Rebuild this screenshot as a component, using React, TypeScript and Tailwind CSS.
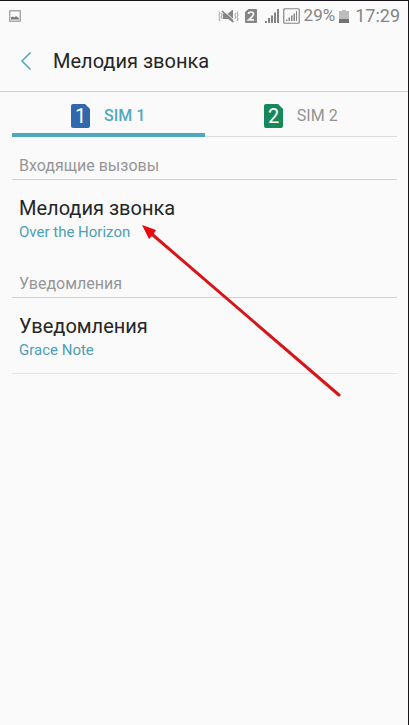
import { useState } from "react";

const sims = [
  { id: 1, label: "SIM 1", color: "#2f68ad" },
  { id: 2, label: "SIM 2", color: "#16885a" },
];

const sections = [
  { heading: "Входящие вызовы", title: "Мелодия звонка", value: "Over the Horizon" },
  { heading: "Уведомления", title: "Уведомления", value: "Grace Note" },
];

function SimIcon({ id, color }: { id: number; color: string }) {
  return (
    <svg width="19" height="24" viewBox="0 0 19 24" aria-hidden="true">
      <path d="M2 0H14L19 5V22a2 2 0 0 1-2 2H2a2 2 0 0 1-2-2V2a2 2 0 0 1 2-2Z" fill={color} />
      <text x="9.5" y="19" textAnchor="middle" fontSize="20" fontWeight="400" fill="#fff">
        {id}
      </text>
    </svg>
  );
}

function StatusBar() {
  return (
    <div className="flex h-[30px] items-center justify-between pr-2 pl-[9px] text-[#858585]">
      <svg width="12" height="12" viewBox="0 0 12 12" aria-hidden="true">
        <rect x="0.75" y="0.75" width="10.5" height="10.5" fill="#fafafa" stroke="#aaa" strokeWidth="1.5" />
        <path d="M2 9.5V7.5L4 6.5 5.5 7.5 7 6 10 8.5V9.5Z" fill="#777" />
      </svg>
      <div className="flex items-center">
        {/* muted, vibrating */}
        <svg width="21" height="14" viewBox="0 0 21 14" fill="none" aria-hidden="true">
          <path d="M1 2.5 2 4 1 6 2 8 1 10 2 12M3.5 4 4 6 3.5 8 4 10M20 2.5 19 4 20 6 19 8 20 10 19 12M17.5 4 17 6 17.5 8 17 10" stroke="#a0a0a0" strokeWidth="1" />
          <path d="M5 4.5H10L15 0.5V13.5L10 10H5Z" fill="currentColor" />
          <path d="M5.5 1.5 17 12" stroke="#fafafa" strokeWidth="1" />
          <path d="M4 2 15.5 13" stroke="currentColor" strokeWidth="1.6" />
        </svg>
        <svg className="ml-[6px]" width="12" height="14" viewBox="0 0 12 14" aria-hidden="true">
          <path d="M3.5 0H11a1 1 0 0 1 1 1V13a1 1 0 0 1-1 1H1a1 1 0 0 1-1-1V3Z" fill="currentColor" />
          <path d="M3.5 5Q3.5 3 6 3T8.5 5.2Q8.5 6.6 3.6 10.8H9" fill="none" stroke="#fafafa" strokeWidth="1.7" />
        </svg>
        <svg className="ml-2" width="14" height="14" viewBox="0 0 14 14" fill="currentColor" aria-hidden="true">
          <path d="M0 12H2V14H0ZM3 9H5V14H3ZM6 6.5H8V14H6ZM9 3.5H11V14H9ZM12 0H14V14H12Z" />
        </svg>
        <svg className="ml-1" width="17" height="16" viewBox="0 0 17 16" aria-hidden="true">
          <rect x="0.75" y="0.75" width="15.5" height="14.5" rx="1" fill="none" stroke="currentColor" strokeWidth="1.2" />
          <path d="M3 11.5H4.5V13H3ZM5.5 9.5H7V13H5.5ZM8 7.5H9.5V13H8ZM10.5 5.5H12V13H10.5ZM13 3H14V13H13Z" fill="currentColor" />
        </svg>
        <span className="ml-1 text-[17px]">29%</span>
        <svg className="ml-1" width="10" height="13" viewBox="0 0 10 13" aria-hidden="true">
          <path d="M3 0H7V1H10V9H0V1H3Z" fill="#bcbcbc" />
          <path d="M0 9H10V13H0Z" fill="#737373" />
        </svg>
        <span className="ml-[6px] text-lg">17:29</span>
      </div>
    </div>
  );
}

export default function App() {
  const [active, setActive] = useState(1);

  return (
    <div className="relative min-h-screen border-t border-r border-[#18151a] bg-[#fafafa] font-['Roboto',sans-serif]">
      <StatusBar />

      <header className="flex h-[61px] items-center border-b border-[#cfcfcf] pl-5">
        <button aria-label="Назад" className="flex w-[33px]">
          <svg width="12" height="20" viewBox="0 0 12 20" fill="none" aria-hidden="true">
            <path d="M10.5 1.5 2 10 10.5 18.5" stroke="#4ca5bd" strokeWidth="1.5" />
          </svg>
        </button>
        <h1 className="text-xl text-[#252525]">Мелодия звонка</h1>
      </header>

      <main className="px-3 pr-[11px]">
        <div role="tablist" className="grid h-[45px] grid-cols-2 border-b border-[#d9dddd]">
          {sims.map((sim) => (
            <button
              key={sim.id}
              role="tab"
              aria-selected={active === sim.id}
              onClick={() => setActive(sim.id)}
              className={`-mb-px flex items-center justify-center gap-[14px] border-b-4 pt-[6px] text-base ${
                active === sim.id
                  ? "border-[#50a8c0] font-medium text-[#50a8c0]"
                  : "border-transparent text-[#929292]"
              }`}
            >
              <SimIcon id={sim.id} color={sim.color} />
              {sim.label}
            </button>
          ))}
        </div>

        {sections.map((section) => (
          <section key={section.heading} className="last:border-b last:border-[#e6e6e6]">
            <h2 className="border-b border-[#d2d2d2] px-[7px] pt-[19px] pb-[3px] text-base leading-5 text-[#969696]">
              {section.heading}
            </h2>
            <button className="block w-full px-[7px] pt-4 pb-[11px] text-left">
              <span className="block text-xl leading-6 text-[#252525]">{section.title}</span>
              <span className="block text-[15px] leading-6 text-[#4b9fb6]">{section.value}</span>
            </button>
          </section>
        ))}
      </main>

      {/* pointer to the ringtone row */}
      <svg className="pointer-events-none absolute top-[223px] left-[141px]" width="202" height="176" viewBox="0 0 202 176" aria-hidden="true">
        <path d="M9 8.5 198 171" stroke="#d91418" strokeWidth="3" strokeLinecap="round" />
        <path d="M1 1 15 6 12 11 8 15Z" fill="#e80a0e" />
      </svg>
    </div>
  );
}
